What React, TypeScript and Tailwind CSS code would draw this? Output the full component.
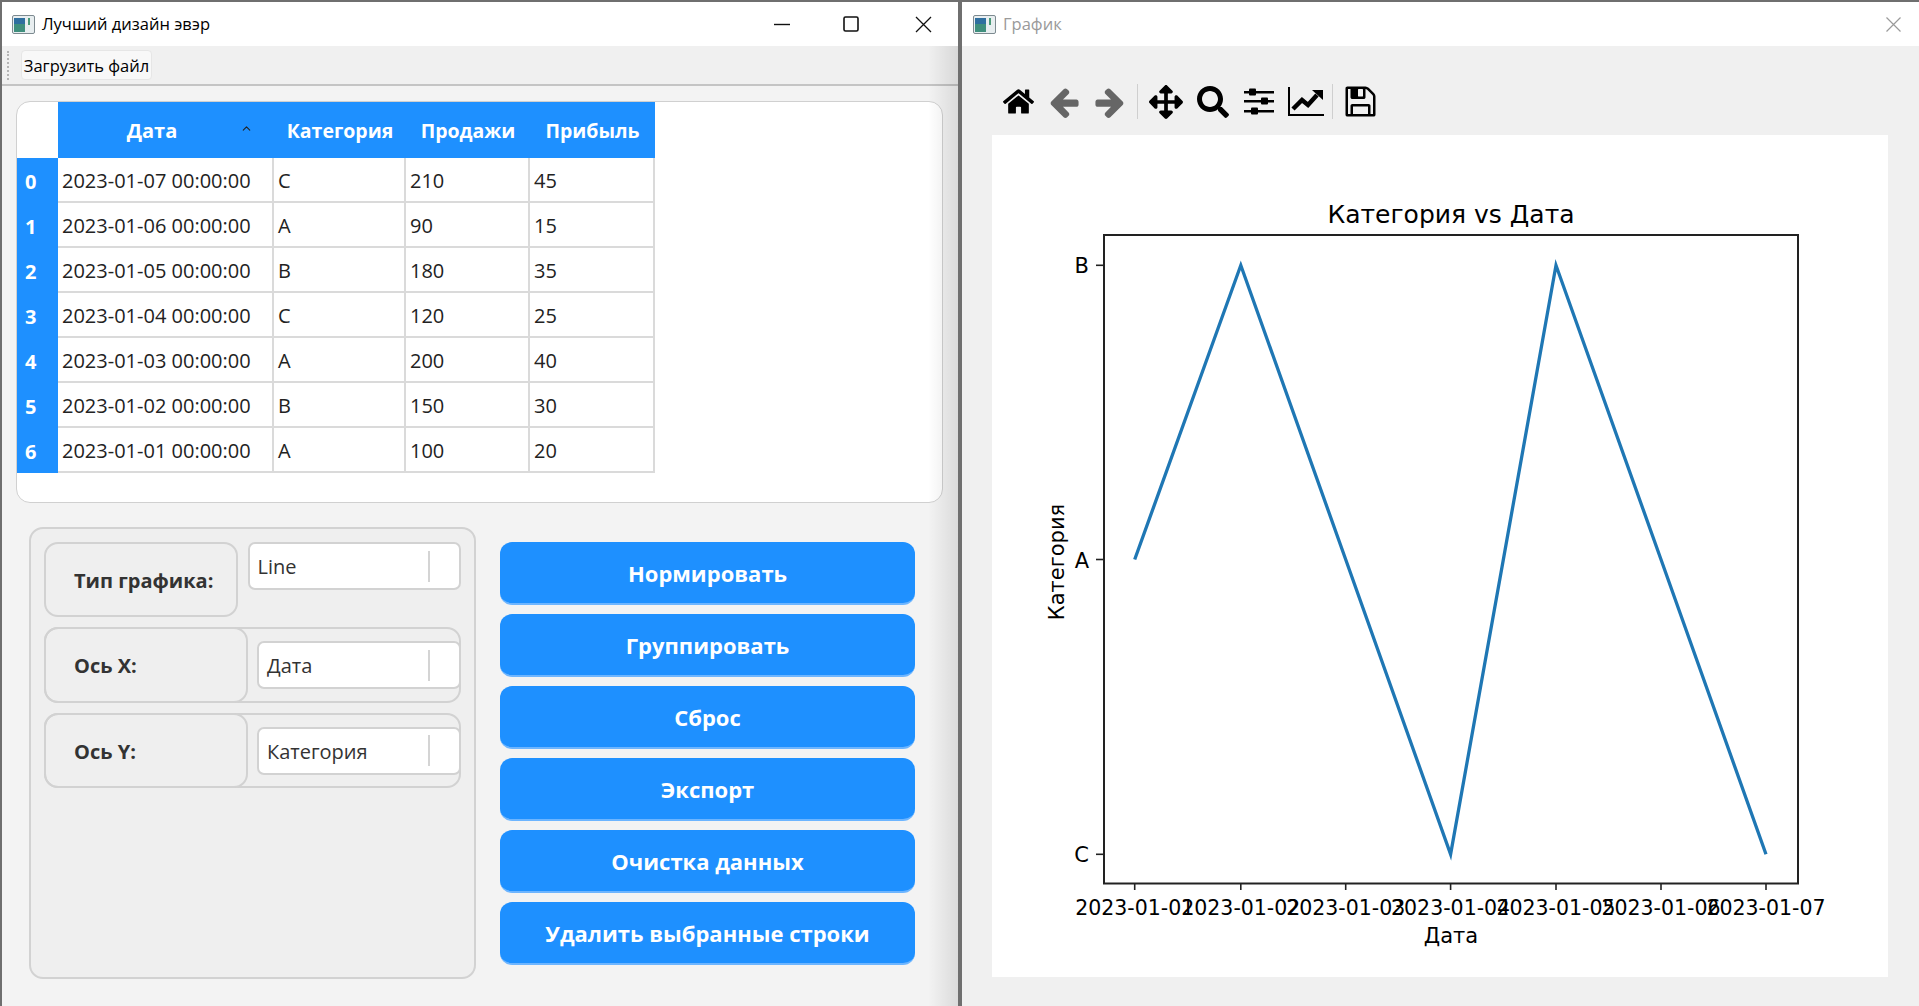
import React from 'react';
import { FaHome, FaArrowsAlt, FaSearch } from 'react-icons/fa';
import { ChevronUp } from 'lucide-react';

const rows = [
  ['2023-01-07 00:00:00', 'C', '210', '45'],
  ['2023-01-06 00:00:00', 'A', '90', '15'],
  ['2023-01-05 00:00:00', 'B', '180', '35'],
  ['2023-01-04 00:00:00', 'C', '120', '25'],
  ['2023-01-03 00:00:00', 'A', '200', '40'],
  ['2023-01-02 00:00:00', 'B', '150', '30'],
  ['2023-01-01 00:00:00', 'A', '100', '20'],
];

const actions = ['Нормировать', 'Группировать', 'Сброс', 'Экспорт', 'Очистка данных', 'Удалить выбранные строки'];

const AppIcon = () => (
  <svg width="23" height="19" viewBox="0 0 23 19">
    <rect x="0.5" y="0.5" width="22" height="18" rx="1.5" fill="#e8eef0" stroke="#7d8a90" />
    <rect x="2" y="3" width="11" height="14" fill="#3f8f7d" />
    <rect x="2" y="3" width="11" height="6" fill="#2f6f9f" />
    <rect x="16" y="3" width="2" height="7" fill="#4a9a78" />
  </svg>
);

const Combo = ({ value, className }: { value: string; className: string }) => (
  <div className={`flex h-[48px] items-center rounded-[7px] border-2 border-[#d2d2d2] bg-white pt-[2px] text-[20px] text-[#333] ${className}`}>
    <span className="flex-1 pl-[8px]">{value}</span>
    <span className="mr-[29px] -mt-[2px] h-[31px] w-[2px] bg-[#d4d4d4]" />
  </div>
);

const ArrowIcon = ({ flip }: { flip?: boolean }) => (
  <svg width="34" height="34" viewBox="0 0 1792 1792" fill="#666" className={flip ? '-scale-x-100' : ''}>
    <path d="M1664 896v128q0 53-32.5 90.5t-84.5 37.5h-704l293 294q38 36 38 90t-38 90l-75 76q-37 37-90 37-52 0-91-37l-651-652q-37-37-37-90 0-52 37-91l651-650q38-38 91-38 52 0 90 38l75 74q38 38 38 91t-38 91l-293 293h704q52 0 84.5 37.5t32.5 90.5z" />
  </svg>
);

const SaveIcon = () => (
  <svg width="35" height="35" viewBox="0 0 1792 1792" fill="#000">
    <path d="M512 1536h768v-384h-768v384zm896 0h128v-896q0-14-10-38.5t-20-34.5l-281-281q-10-10-34-20t-39-10v416q0 40-28 68t-68 28h-576q-40 0-68-28t-28-68v-416h-128v1280h128v-416q0-40 28-68t68-28h832q40 0 68 28t28 68v416zm-384-928v-320q0-13-9.5-22.5t-22.5-9.5h-192q-13 0-22.5 9.5t-9.5 22.5v320q0 13 9.5 22.5t22.5 9.5h192q13 0 22.5-9.5t9.5-22.5zm640 32v928q0 40-28 68t-68 28h-1344q-40 0-68-28t-28-68v-1344q0-40 28-68t68-28h928q40 0 88 20t76 48l280 280q28 28 48 76t20 88z" />
  </svg>
);

const SlidersIcon = () => (
  <svg width="31" height="27" viewBox="0 0 31 27" fill="#000">
    <rect x="0" y="3" width="30" height="2.5" />
    <rect x="0" y="12" width="30" height="2.5" />
    <rect x="0" y="22" width="30" height="2.5" />
    <rect x="5" y="0.5" width="7" height="7" rx="1" />
    <rect x="17" y="9.5" width="7" height="7" rx="1" />
    <rect x="7" y="19.5" width="7" height="7" rx="1" />
  </svg>
);

const TrendIcon = () => (
  <svg width="36" height="30" viewBox="0 0 36 30">
    <path d="M1 0v28h35" fill="none" stroke="#000" strokeWidth="2" />
    <path d="M5 22l9-9 6 5 9-10" fill="none" stroke="#000" strokeWidth="4.5" />
    <path d="M24 3h11v10z" fill="#000" />
  </svg>
);

const Chart = () => {
  const ticks = [142.7, 248.8, 353.7, 458.6, 564, 669, 774];
  const labels = ['2023-01-01', '2023-01-02', '2023-01-03', '2023-01-04', '2023-01-05', '2023-01-06', '2023-01-07'];
  const yTicks = [
    { label: 'B', y: 130.3 },
    { label: 'A', y: 424.5 },
    { label: 'C', y: 719.3 },
  ];
  return (
    <svg width="896" height="842" viewBox="0 0 896 842" className="font-['DejaVu_Sans',sans-serif]">
      <text x="459" y="88" textAnchor="middle" fontSize="25" fill="#000">Категория vs Дата</text>
      <rect x="112" y="100" width="694" height="648.5" fill="none" stroke="#222" strokeWidth="2" />
      <polyline
        points="142.7,424.5 248.8,130.3 353.7,424.5 458.6,719.3 564,130.3 669,424.5 774,719.3"
        fill="none"
        stroke="#1f77b4"
        strokeWidth="3.3"
      />
      {ticks.map((x, i) => (
        <g key={labels[i]}>
          <line x1={x} x2={x} y1="748" y2="755" stroke="#222" strokeWidth="1.6" />
          <text x={x} y="780" textAnchor="middle" fontSize="20.5" fill="#000">{labels[i]}</text>
        </g>
      ))}
      {yTicks.map((t) => (
        <g key={t.label}>
          <line x1="104" x2="112" y1={t.y} y2={t.y} stroke="#222" strokeWidth="1.6" />
          <text x="97" y={t.y + 8} textAnchor="end" fontSize="21" fill="#000">{t.label}</text>
        </g>
      ))}
      <text x="459" y="808" textAnchor="middle" fontSize="21" fill="#000">Дата</text>
      <text transform="translate(72 427) rotate(-90)" textAnchor="middle" fontSize="21" fill="#000">Категория</text>
    </svg>
  );
};

export default function App() {
  return (
    <div className="flex h-[1006px] w-[1919px] overflow-hidden bg-[#6f6f6f] font-['Open_Sans',sans-serif]">
      {/* main window */}
      <div className="relative flex h-full w-[960px] flex-col border-x-2 border-t-2 border-[#6f6f6f] bg-[#f3f3f3]">
        <div className="flex h-[44px] shrink-0 items-center bg-white pl-[10px]">
          <AppIcon />
          <span className="ml-[7px] text-[16.5px] text-black">Лучший дизайн эвэр</span>
          <div className="ml-auto mr-[26px] flex items-center">
            <svg width="17" height="17" viewBox="0 0 17 17" stroke="#111" strokeWidth="1.4" fill="none">
              <path d="M0 8.5h16" />
            </svg>
            <svg width="17" height="17" viewBox="0 0 17 17" stroke="#111" strokeWidth="1.6" fill="none" className="ml-[52px]">
              <rect x="1" y="1" width="14" height="14" rx="1.5" />
            </svg>
            <svg width="17" height="17" viewBox="0 0 17 17" stroke="#111" strokeWidth="1.3" fill="none" className="ml-[55px]">
              <path d="M1 1l15 15M16 1L1 16" />
            </svg>
          </div>
        </div>
        <div className="flex h-[40px] shrink-0 items-center border-b-2 border-[#c4c4c4] bg-[#f0f0f0]">
          <div className="ml-[5px] h-[29px] border-l-2 border-dotted border-[#b5b5b5]" />
          <div className="ml-[12px] flex h-[30px] w-[131px] items-center justify-center rounded-[4px] border border-[#e6e6e6] bg-[#f8f8f8] pt-[3px] text-[16.5px] text-black">
            Загрузить файл
          </div>
        </div>

        {/* table */}
        <div className="ml-[14px] mt-[15px] h-[402px] w-[927px] shrink-0 overflow-hidden rounded-[14px] border border-[#d0d0d0] bg-white">
          <div className="grid grid-cols-[41px_216px_132px_124px_125px] text-[20px] text-[#222]">
            <div className="h-[56px]" />
            <div className="relative flex h-[56px] items-center justify-center bg-[#1e90ff] pr-[28px] pt-[1px] font-bold text-white">
              Дата
              <ChevronUp size={13} strokeWidth={2} className="absolute left-[182px] top-[20px] text-[#222]" />
            </div>
            {['Категория', 'Продажи', 'Прибыль'].map((h) => (
              <div key={h} className="flex h-[56px] items-center justify-center bg-[#1e90ff] pt-[1px] text-[19.5px] font-bold text-white">
                {h}
              </div>
            ))}
            {rows.map((row, i) => (
              <React.Fragment key={i}>
                <div className="flex h-[45px] items-center bg-[#1e90ff] pl-[8px] pt-[2px] font-bold text-white">{i}</div>
                {row.map((cell, j) => (
                  <div key={j} className="flex h-[45px] items-center border-b-2 border-r-2 border-[#dadada] pl-[4px] pt-[2px]">
                    {cell}
                  </div>
                ))}
              </React.Fragment>
            ))}
          </div>
        </div>

        <div className="ml-[27px] mt-[24px] flex items-start">
          {/* selectors */}
          <div className="flex h-[452px] w-[447px] shrink-0 flex-col gap-[10px] rounded-[14px] border-2 border-[#d2d2d2] bg-[#efefef] pl-[13px] pr-[13px] pt-[13px] text-[20px]">
            <div className="flex h-[75px] items-start">
              <div className="flex h-[75px] w-[194px] items-center rounded-[14px] border-2 border-[#d2d2d2] pl-[28px] pt-[2px] font-bold text-[#333]">
                Тип графика:
              </div>
              <Combo value="Line" className="ml-[10px] w-[214px]" />
            </div>
            {[
              { label: 'Ось X:', value: 'Дата', h: 'h-[76px]' },
              { label: 'Ось Y:', value: 'Категория', h: 'h-[75px]' },
            ].map((r) => (
              <div key={r.label} className={`flex items-center rounded-[14px] border-2 border-[#d2d2d2] ${r.h} w-[417px]`}>
                <div className="-my-[2px] -ml-[2px] flex h-[calc(100%+4px)] w-[204px] items-center rounded-[14px] border-2 border-[#d2d2d2] pl-[28px] pt-[2px] font-bold text-[#333]">
                  {r.label}
                </div>
                <Combo value={r.value} className="-mr-[2px] ml-[9px] w-[204px]" />
              </div>
            ))}
          </div>

          {/* action buttons */}
          <div className="ml-[24px] mt-[15px] flex w-[415px] flex-col gap-[9px]">
            {actions.map((a) => (
              <button
                key={a}
                className="h-[63px] rounded-[12px] border-b-2 border-[#6db5ff] bg-[#1e90ff] pt-[2px] text-[22px] font-bold text-white"
              >
                {a}
              </button>
            ))}
          </div>
        </div>
        {/* shadow from neighbour window */}
        <div className="absolute bottom-0 right-0 top-[44px] w-[30px] bg-gradient-to-r from-transparent to-black/10" />
      </div>

      {/* plot window */}
      <div className="flex h-full w-[959px] flex-col border-l-2 border-t-2 border-[#6f6f6f] bg-[#f0f0f0]">
        <div className="flex h-[44px] shrink-0 items-center bg-white pl-[11px]">
          <AppIcon />
          <span className="ml-[7px] text-[16.5px] text-[#9a9a9a]">График</span>
          <svg width="15" height="15" viewBox="0 0 15 15" stroke="#9a9a9a" strokeWidth="1.2" fill="none" className="ml-auto mr-[18px]">
            <path d="M0.5 0.5l14 14M14.5 0.5l-14 14" />
          </svg>
        </div>
        <div className="flex h-[89px] shrink-0 items-center pl-[41px] pt-[22px]">
          <FaHome size={31} />
          <span className="ml-[13px]"><ArrowIcon /></span>
          <span className="ml-[12px]"><ArrowIcon flip /></span>
          <span className="ml-[10px] h-[35px] w-px bg-[#cfcfcf]" />
          <FaArrowsAlt size={34} className="ml-[11px]" />
          <FaSearch size={32} className="ml-[14px]" />
          <span className="ml-[15px]"><SlidersIcon /></span>
          <span className="ml-[13px]"><TrendIcon /></span>
          <span className="ml-[8px] h-[35px] w-px bg-[#cfcfcf]" />
          <span className="ml-[10px]"><SaveIcon /></span>
        </div>
        <div className="ml-[30px] h-[842px] w-[896px] shrink-0 bg-white">
          <Chart />
        </div>
      </div>
    </div>
  );
}
